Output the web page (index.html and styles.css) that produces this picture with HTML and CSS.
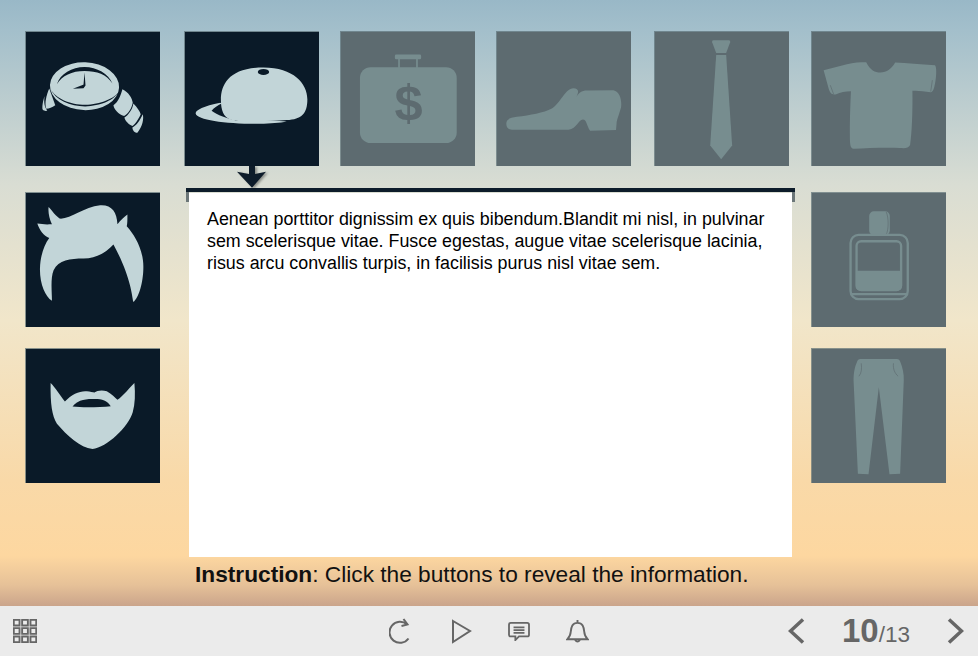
FILE: index.html
```html
<!DOCTYPE html>
<html lang="en">
<head>
    <meta charset="UTF-8">
    <meta name="viewport" content="width=device-width, initial-scale=1.0">
    <title>Instruction</title>
    <link rel="stylesheet" href="styles.css">
</head>
<body>
    <main class="stage">
        <div class="board">
            <div class="tile tile-on col-1 row-1">
                <svg class="art" viewBox="77 35 403 403">
                    <ellipse cx="253" cy="198" rx="104" ry="72" transform="rotate(2 253 198)"/>
                    <path class="cut" d="M170 192C180 160 215 140 253 140C290 140 325 160 337 190C320 162 290 152 253 152C215 152 185 166 170 192Z"/>
                    <path class="cut" d="M150 205C165 240 210 258 255 259C300 258 345 240 358 212C345 235 300 254 255 254C210 254 165 235 150 205Z"/>
                    <path class="cut" d="M250 193L253 157L256 196L250 204L218 206L249 194Z"/>
                    <path d="M147 205L165 255C155 262 147 265 138 266C132 250 138 225 147 205Z"/>
                    <path d="M133 228C128 240 125 260 127 268C132 273 138 273 141 271C133 262 130 245 133 228Z"/>
                    <path d="M367 207C385 215 397 235 398 248C395 265 385 280 372 288C355 282 342 268 340 255C355 245 362 225 367 207Z"/>
                    <path d="M400 250C412 262 420 275 422 282C415 298 405 312 397 318C385 312 375 302 373 292C385 285 397 268 400 250Z"/>
                    <path d="M428 282C432 295 428 318 412 338C402 338 397 328 397 322C410 315 420 300 428 282Z"/>
                </svg>
            </div>
            <div class="tile tile-on col-2 row-1">
                <svg class="art" viewBox="554 35 403 403">
                    <path d="M660 248C610 258 586 270 586 280C590 300 680 312 780 311C810 310 840 308 860 304L790 300L664 250Z"/>
                    <path class="cut" d="M634 272C642 262 652 256 664 250L680 290L715 303C680 295 650 285 634 272Z"/>
                    <path d="M662 240C662 190 690 142 790 142C880 142 922 190 922 238C922 280 905 298 860 300C800 305 720 305 690 298C670 290 662 270 662 240Z"/>
                    <ellipse class="cut" cx="790" cy="155" rx="17" ry="9"/>
                </svg>
            </div>
            <div class="tile col-3 row-1">
                <svg class="art" viewBox="32 35 403 403">
                    <rect x="89" y="141" width="291" height="228" rx="32"/>
                    <rect x="194" y="103" width="79" height="14" rx="4"/>
                    <rect x="204" y="115" width="5" height="28"/>
                    <rect x="258" y="115" width="5" height="28"/>
                    <text class="dollar" x="235" y="300" text-anchor="middle">$</text>
                </svg>
            </div>
            <div class="tile col-4 row-1">
                <svg class="art" viewBox="500 35 403 403">
                    <path d="M528 310C528 298 540 292 560 290C600 285 640 278 665 265C690 250 705 205 730 204C745 205 748 212 738 232C745 218 755 211 770 211L850 210C870 215 876 240 873 262C868 280 862 295 860 305L858 330L780 332C770 318 770 298 758 298C745 298 740 325 715 329L545 329C532 328 528 320 528 310Z"/>
                </svg>
            </div>
            <div class="tile col-5 row-1">
                <svg class="art" viewBox="14 35 403 403">
                    <path d="M190 60L236 60Q242 60 240 66L228 98L198 98L186 66Q184 60 190 60Z"/>
                    <path d="M198 104L228 104L246 376L213 418L180 376Z"/>
                </svg>
            </div>
            <div class="tile col-6 row-1">
                <svg class="art" viewBox="485 35 403 403">
                    <path d="M520 150L590 132C610 127 630 126 648 126C660 150 675 157 690 157C710 157 725 145 735 127C770 128 810 133 855 135C860 140 860 165 855 190C852 205 850 215 842 216C820 213 800 210 787 212C788 280 785 340 780 375C775 385 765 385 750 384C700 382 650 385 610 386C600 385 600 375 599 360C598 310 600 260 602 213C585 213 570 217 558 222C545 225 540 220 535 205Z"/>
                    <path class="seam thin" d="M847 180L842 214M540 195L550 222"/>
                </svg>
            </div>

            <div class="tile tile-on col-1 row-2">
                <svg class="art" viewBox="77 98 403 403">
                    <path d="M145 140C155 150 160 160 178 175C210 178 250 140 300 135C335 133 350 155 352 192C362 180 372 170 382 163C382 180 382 190 380 198C405 225 430 270 430 320C430 370 415 415 400 426C395 400 390 345 340 253C320 275 290 295 250 295C210 295 175 300 160 330C150 355 155 395 155 422C135 410 118 370 119 325C120 290 130 255 147 233C130 228 118 210 111 190C125 192 135 193 155 192C147 175 143 155 145 140Z"/>
                </svg>
            </div>
            <div class="tile tile-on col-1 row-3">
                <svg class="art" viewBox="77 25 403 403">
                    <path d="M151 127C165 140 180 165 194 183C215 160 240 150 260 152C270 153 278 155 283 156C290 150 305 147 320 152C335 160 345 172 352 178C370 165 390 140 403 127C406 160 405 190 398 215C385 260 320 320 277 326C240 322 200 285 170 250C155 225 150 190 151 127Z"/>
                    <path class="cut" d="M217 198C235 175 260 175 285 175C305 175 322 180 332 197C300 200 250 202 217 198Z"/>
                </svg>
            </div>

            <section class="panel">
                <div class="panel-body">
                    <p>Aenean porttitor dignissim ex quis bibendum.Blandit mi nisl, in pulvinar sem scelerisque vitae. Fusce egestas, augue vitae scelerisque lacinia, risus arcu convallis turpis, in facilisis purus nisl vitae sem.</p>
                </div>
            </section>

            <div class="tile col-6 row-2">
                <svg class="art" viewBox="95 38 403 403">
                    <rect x="267" y="93" width="62" height="72" rx="14"/>
                    <path class="seam thin" d="M318 95C326 110 326 150 318 163"/>
                    <rect class="line" x="211" y="164" width="172" height="193" rx="24"/>
                    <rect class="line" x="229" y="183" width="134" height="147" rx="14"/>
                    <path d="M227 272H365V318Q365 332 351 332H241Q227 332 227 318Z"/>
                    <path class="line" d="M213 342H381"/>
                </svg>
            </div>
            <div class="tile col-6 row-3">
                <svg class="art" viewBox="95 505 403 403">
                    <path d="M240 535L350 535Q358 535 361 545C367 560 372 580 371 600L360 880L328 882L296 620L265 882L233 880L220 600C220 575 224 558 230 545Q233 535 240 535Z"/>
                    <path class="seam thin" d="M243 548C245 565 244 578 236 587M340 548C338 565 344 578 354 587"/>
                </svg>
            </div>

            <svg class="pointer" viewBox="0 0 29 22" width="29" height="22">
                <path d="M12 0H18V8L29 5.700L15 21.700L0 5.700L12 8Z"/>
            </svg>
        </div>
        <p class="instruction"><strong>Instruction</strong>: Click the buttons to reveal the information.</p>
    </main>

    <footer class="toolbar">
        <svg class="tool tool-menu" viewBox="0 0 23 23" width="24" height="24">
            <path d="M.75.75h5.500v5.500H.75zM8.750.75h5.500v5.500h-5.500zM16.750.75h5.500v5.500h-5.500zM.75 8.750h5.500v5.500H.75zM8.750 8.750h5.500v5.500h-5.500zM16.750 8.750h5.500v5.500h-5.500zM.75 16.750h5.500v5.500H.75zM8.750 16.750h5.500v5.500h-5.500zM16.750 16.750h5.500v5.500h-5.500z"/>
        </svg>
        <div class="tools">
            <svg class="tool" viewBox="0 0 25 26" width="25" height="26">
                <path d="M18 6.500A10.500 10.500 0 1 0 19.500 20.500"/>
                <path d="M14.500 1L18.500 6.500L12.500 8"/>
            </svg>
            <svg class="tool" viewBox="0 0 22 26" width="22" height="26">
                <path d="M3 3L20 13L3 24Z"/>
            </svg>
            <svg class="tool" viewBox="0 0 24 22" width="22" height="20">
                <path d="M3 2H21Q23 2 23 4V15Q23 17 21 17H12L8 21V17H3Q1 17 1 15V4Q1 2 3 2Z"/>
                <path d="M6 7H18M6 10H18M6 13H18"/>
            </svg>
            <svg class="tool" viewBox="0 0 24 26" width="23" height="25">
                <path d="M12 1V4M12 4C6.500 4 5.500 8 5 13C4.700 17 3.500 19 1.500 21H22.500C20.500 19 19.300 17 19 13C18.500 8 17.500 4 12 4Z"/>
                <path d="M9.500 21.500Q12 25.500 14.500 21.500"/>
            </svg>
        </div>
        <nav class="pager">
            <svg class="tool chevron" viewBox="0 0 17 26" width="17" height="26">
                <path d="M15 1.500L2.500 13L15 24.500"/>
            </svg>
            <div class="count"><b>10</b>/13</div>
            <svg class="tool chevron" viewBox="0 0 17 26" width="17" height="26">
                <path d="M2 1.500L14.500 13L2 24.500"/>
            </svg>
        </nav>
    </footer>
</body>
</html>
```

FILE: styles.css
```css
body {
    font-family: "Liberation Sans", Arial, sans-serif;
    margin: 0;
    overflow: hidden;
    color: #111;
}
.stage {
    height: 606px;
    background: linear-gradient(180deg, #99b8c7 0, #a3bfcb 30px, #d9ddd3 185px, #f1e6ca 320px, #f9d9a8 480px, #fdd7a0 556px, #e6c198 585px, #caa48b 606px);
}
.board {
    position: relative;
    display: grid;
    grid-template-columns: 135px 24px 135px 21px 135px 21px 135px 23px 135px 22px 135px;
    grid-template-rows: 135px 22px 4px 135px 21px 135px 74px;
    padding: 31px 0 0 25px;
}
.tile {
    box-sizing: border-box;
    background: #5d6b70 padding-box;
    border-top: 1px solid rgba(90, 110, 115, 0.7);
    border-left: 1px solid rgba(90, 110, 115, 0.7);
    fill: #778d8f;
}
.tile-on {
    background-color: #0a1a28;
    fill: #c2d5d8;
}
.col-1 { grid-column: 1; }
.col-2 { grid-column: 3; }
.col-3 { grid-column: 5; }
.col-4 { grid-column: 7; }
.col-5 { grid-column: 9; }
.col-6 { grid-column: 11; }
.row-1 { grid-row: 1; }
.row-2 { grid-row: 4; }
.row-3 { grid-row: 6; }
.art {
    display: block;
    width: 100%;
    height: 100%;
}
.tile-on .cut {
    fill: #0a1a28;
}
.seam {
    fill: none;
    stroke: #5d6b70;
    stroke-width: 4;
}
.thin {
    stroke-width: 2;
}
.line {
    fill: none;
    stroke: #778d8f;
    stroke-width: 7;
}
.dollar {
    font-family: "Liberation Sans", Arial, sans-serif;
    font-size: 152px;
    font-weight: 700;
    fill: #5d6b70;
}
.panel {
    grid-column: 3 / 11;
    grid-row: 3 / 8;
    position: relative;
    margin: 0 16px 0 2px;
    border-top: 4px solid #0d1c2a;
    display: flex;
}
.panel::before, .panel::after {
    content: "";
    position: absolute;
    top: 0;
    width: 3px;
    height: 10px;
    background: #6b7678;
}
.panel::before { left: 0; }
.panel::after { right: 0; }
.panel-body {
    flex: 1;
    margin: 1px 3px 0;
    padding: 15px 18px 0;
    background: #fff;
    font-size: 17.850px;
    line-height: 22px;
    color: #000;
}
.panel-body p {
    margin: 0;
}
.pointer {
    position: absolute;
    left: 237px;
    top: 166px;
    fill: #0d1c2a;
    filter: drop-shadow(2px 1px 1px rgba(0, 0, 0, 0.35));
}
.instruction {
    margin: 0 0 0 195px;
    font-size: 22.700px;
    line-height: 34px;
}
.toolbar {
    display: flex;
    align-items: center;
    height: 50px;
    padding: 0 14px 0 13px;
    background: #ebebeb;
}
.tool {
    fill: none;
    stroke: #666;
    stroke-width: 2;
}
.tool-menu {
    stroke-width: 1.800;
}
.tools {
    display: flex;
    align-items: center;
    gap: 36px;
    margin-left: 352px;
}
.pager {
    display: flex;
    align-items: center;
    margin-left: auto;
}
.chevron {
    stroke-width: 3.500;
}
.count {
    width: 142px;
    padding-left: 37px;
    box-sizing: border-box;
    font-size: 22.500px;
    color: #666;
}
.count b {
    font-size: 33px;
}
```
